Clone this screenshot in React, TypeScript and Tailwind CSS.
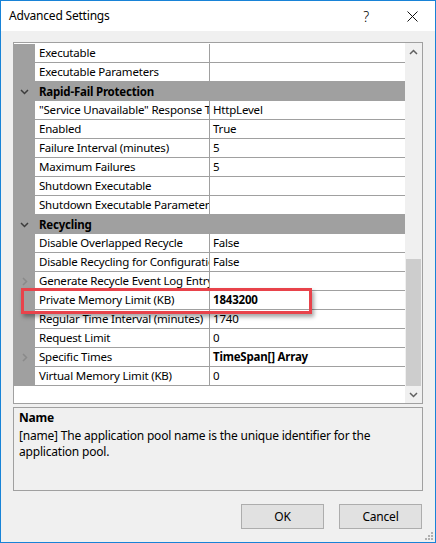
import React from "react";

type Row =
  | { kind: "cat"; name: string }
  | { kind: "prop"; name: string; value?: string; bold?: boolean; expand?: boolean };

const rows: Row[] = [
  { kind: "prop", name: "Executable" },
  { kind: "prop", name: "Executable Parameters" },
  { kind: "cat", name: "Rapid-Fail Protection" },
  { kind: "prop", name: "\"Service Unavailable\" Response Type", value: "HttpLevel" },
  { kind: "prop", name: "Enabled", value: "True" },
  { kind: "prop", name: "Failure Interval (minutes)", value: "5" },
  { kind: "prop", name: "Maximum Failures", value: "5" },
  { kind: "prop", name: "Shutdown Executable" },
  { kind: "prop", name: "Shutdown Executable Parameters" },
  { kind: "cat", name: "Recycling" },
  { kind: "prop", name: "Disable Overlapped Recycle", value: "False" },
  { kind: "prop", name: "Disable Recycling for Configuration Changes", value: "False" },
  { kind: "prop", name: "Generate Recycle Event Log Entry", expand: true },
  { kind: "prop", name: "Private Memory Limit (KB)", value: "1843200", bold: true },
  { kind: "prop", name: "Regular Time Interval (minutes)", value: "1740" },
  { kind: "prop", name: "Request Limit", value: "0" },
  { kind: "prop", name: "Specific Times", value: "TimeSpan[] Array", bold: true, expand: true },
  { kind: "prop", name: "Virtual Memory Limit (KB)", value: "0" },
];

function ChevronDown({ className }: { className?: string }) {
  return (
    <svg width="9" height="6" viewBox="0 0 9 6" className={className}>
      <path d="M1 1 L4.5 4.5 L8 1" fill="none" stroke="currentColor" strokeWidth="1.5" />
    </svg>
  );
}

function ChevronUp({ className }: { className?: string }) {
  return (
    <svg width="9" height="6" viewBox="0 0 9 6" className={className}>
      <path d="M1 5 L4.5 1.5 L8 5" fill="none" stroke="currentColor" strokeWidth="1.5" />
    </svg>
  );
}

function ChevronRight() {
  return (
    <svg width="6" height="9" viewBox="0 0 6 9" className="text-[#8a8a8a]">
      <path d="M1 1 L4.5 4.5 L1 8" fill="none" stroke="currentColor" strokeWidth="1.5" />
    </svg>
  );
}

export default function App() {
  return (
    <div
      className="relative w-[436px] h-[543px] border border-[#1883d7] bg-[#f0f0f0] flex flex-col text-[11.5px] tracking-[-0.2px] text-black"
      style={{ fontFamily: '"Noto Sans", "Open Sans", sans-serif' }}
    >
      {/* title bar */}
      <div className="h-[30px] bg-white flex items-center pl-[8px]">
        <span className="flex-1 text-[12px]">Advanced Settings</span>
        <span className="w-[46px] text-center text-[14px] font-light">?</span>
        <span className="w-[46px] flex justify-center">
          <svg width="11" height="11" viewBox="0 0 11 11">
            <path d="M0.5 0.5 L10.5 10.5 M10.5 0.5 L0.5 10.5" stroke="#111" strokeWidth="1" />
          </svg>
        </span>
      </div>

      <div className="flex-1 flex flex-col px-[12px] pt-[11px]">
        {/* property grid */}
        <div className="relative h-[362px] border border-[#a0a0a0] bg-white flex">
          <div className="flex-1 flex flex-col overflow-hidden pt-[1px]">
            {rows.map((r, i) =>
              r.kind === "cat" ? (
                <div key={i} className="h-[19px] shrink-0 bg-[#a0a0a0] flex items-center">
                  <div className="w-[21px] flex justify-center">
                    <ChevronDown className="text-[#3c3c3c]" />
                  </div>
                  <span className="pl-[4px] font-bold">{r.name}</span>
                </div>
              ) : (
                <div key={i} className="h-[19px] shrink-0 flex">
                  <div className="w-[21px] bg-[#a0a0a0] flex items-center justify-center">
                    {r.expand && <ChevronRight />}
                  </div>
                  <div className="w-[175px] border-b border-r border-[#a0a0a0] pl-[4px] flex items-center overflow-hidden whitespace-nowrap">
                    {r.name}
                  </div>
                  <div
                    className={`flex-1 border-b border-[#a0a0a0] pl-[3px] flex items-center whitespace-nowrap ${
                      r.bold ? "font-bold" : ""
                    }`}
                  >
                    {r.value ?? ""}
                  </div>
                </div>
              )
            )}
          </div>
          {/* scrollbar */}
          <div className="w-[17px] bg-[#f0f0f0] flex flex-col">
            <div className="h-[17px] flex items-center justify-center">
              <ChevronUp className="text-[#606060]" />
            </div>
            <div className="flex-1 flex flex-col justify-end">
              <div className="h-[127px] bg-[#cdcdcd] mx-[1px]" />
            </div>
            <div className="h-[17px] flex items-center justify-center">
              <ChevronDown className="text-[#606060]" />
            </div>
          </div>

          {/* red highlight */}
          <div className="absolute left-[7px] top-[245px] w-[291px] h-[26px] border-[3px] border-[#e8434b] shadow-[2px_3px_4px_rgba(0,0,0,0.35)]" />
        </div>

        {/* description */}
        <div className="mt-[3px] h-[84px] border border-[#a0a0a0] px-[5px] pt-[2px] leading-[16px] text-[12px]">
          <div className="font-bold">Name</div>
          <div className="mt-[2px]">
            [name] The application pool name is the unique identifier for the
            <br />
            application pool.
          </div>
        </div>

        {/* buttons */}
        <div className="flex justify-end gap-[15px] mt-[13px] pr-[1px]">
          <button className="w-[83px] h-[25px] bg-[#e1e1e1] border border-[#adadad] text-[12px]">OK</button>
          <button className="w-[83px] h-[25px] bg-[#e1e1e1] border border-[#adadad] text-[12px]">Cancel</button>
        </div>
      </div>

      {/* resize grip */}
      <svg width="10" height="10" viewBox="0 0 10 10" className="absolute right-[1px] bottom-[1px]">
        <rect x="7" y="1" width="2" height="2" fill="#b0b0b0" />
        <rect x="4" y="4" width="2" height="2" fill="#b0b0b0" />
        <rect x="7" y="4" width="2" height="2" fill="#b0b0b0" />
        <rect x="1" y="7" width="2" height="2" fill="#b0b0b0" />
        <rect x="4" y="7" width="2" height="2" fill="#b0b0b0" />
        <rect x="7" y="7" width="2" height="2" fill="#b0b0b0" />
      </svg>
    </div>
  );
}
